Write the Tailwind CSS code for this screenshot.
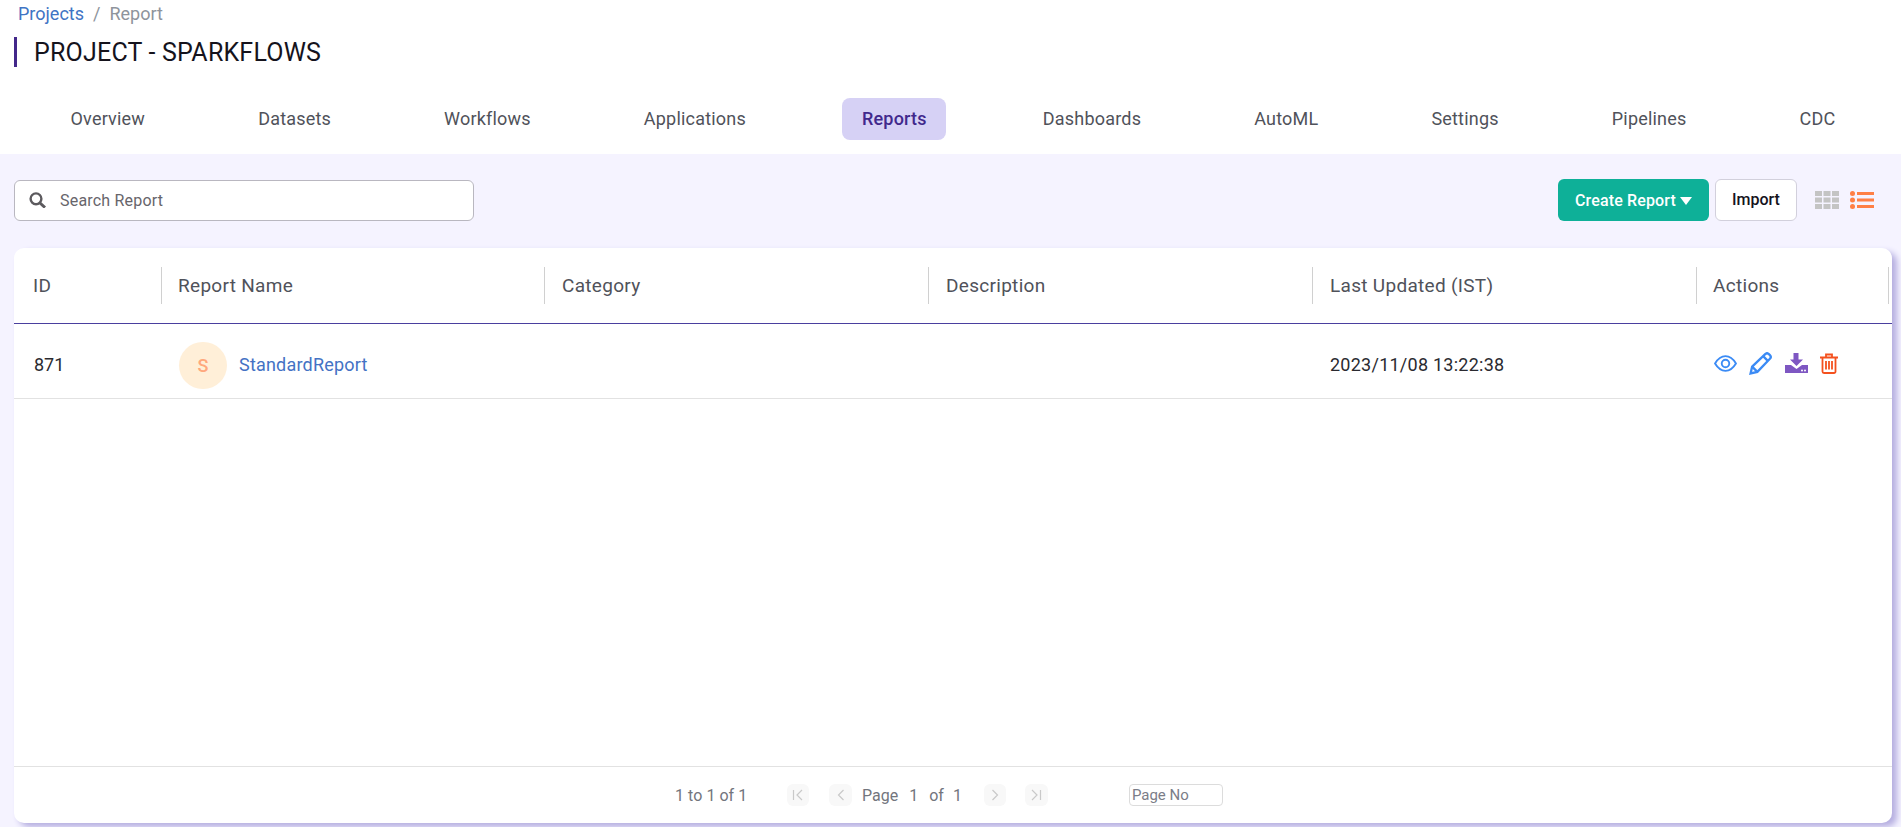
<!DOCTYPE html>
<html lang="en">

<head>
    <meta charset="UTF-8" />
    <title>Project Reports</title>
    <script src="https://cdn.jsdelivr.net/npm/@tailwindcss/browser@4"></script>
</head>

<body class="font-['Roboto',sans-serif] bg-[#f5f3ff] overflow-hidden">
    <div class="h-[827px] flex flex-col">
        <!-- top section -->
        <header class="bg-white h-[154px] shrink-0">
            <nav class="flex items-center gap-[9px] pl-[18px] h-[28px] text-[18px] leading-[28px]">
                <a class="text-[#4074c4]">Projects</a>
                <span class="text-[#8e949c]">/</span>
                <span class="text-[#8e949c]">Report</span>
            </nav>
            <div class="mt-[9px] ml-[14px] h-[30px] pl-[17px] border-l-[3px] border-[#43288a] flex items-center">
                <h1 class="text-[25px] tracking-[0.2px] pt-[2px] text-[#15131c]">PROJECT - SPARKFLOWS</h1>
            </div>
            <div class="mt-[31px] flex justify-around items-center pl-[14px] pr-[9px] text-[18px] tracking-[0.2px] text-[#50525a]">
                <a class="h-[42px] px-[19.5px] pb-[2px] flex items-center">Overview</a>
                <a class="h-[42px] px-[19.5px] pb-[2px] flex items-center">Datasets</a>
                <a class="h-[42px] px-[19.5px] pb-[2px] flex items-center">Workflows</a>
                <a class="h-[42px] px-[19.5px] pb-[2px] mr-[3px] flex items-center">Applications</a>
                <a class="h-[42px] px-[19.5px] pb-[2px] flex items-center rounded-[8px] bg-[#d6d1f5] text-[#41288c] font-medium">Reports</a>
                <a class="h-[42px] px-[19.5px] pb-[2px] ml-[3px] flex items-center">Dashboards</a>
                <a class="h-[42px] px-[19.5px] pb-[2px] flex items-center">AutoML</a>
                <a class="h-[42px] px-[19.5px] pb-[2px] flex items-center">Settings</a>
                <a class="h-[42px] px-[19.5px] pb-[2px] flex items-center">Pipelines</a>
                <a class="h-[42px] px-[19.5px] pb-[2px] flex items-center">CDC</a>
            </div>
        </header>

        <!-- toolbar -->
        <div class="mt-[25px] pl-[14px] pr-[27px] flex items-center justify-between h-[42px] shrink-0">
            <div class="w-[460px] h-[41px] bg-white border border-[#b9b7c0] rounded-[6px] flex items-center pl-[14px] gap-[14px]">
                <svg class="w-[17px] h-[16px] text-[#5c5a5e]" viewBox="0 0 17 16" fill="none" stroke="currentColor">
                    <circle cx="7" cy="6.8" r="5.4" stroke-width="2.4" />
                    <path d="M11 11l5 4.5" stroke-width="3" />
                </svg>
                <span class="text-[16px] tracking-[0.2px] pt-[2px] text-[#67656b]">Search Report</span>
            </div>
            <div class="flex items-center">
                <button class="w-[151px] h-[42px] pt-[1px] rounded-[6px] bg-[#0eb098] text-white text-[16px] tracking-[0.15px] font-medium flex items-center justify-center gap-[4px]">
                    Create Report
                    <svg class="w-[12px] h-[8px]" viewBox="0 0 12 8" fill="currentColor"><path d="M0 0h12L6 8z" /></svg>
                </button>
                <button class="ml-[6px] w-[82px] h-[42px] rounded-[6px] bg-white border border-[#d2d0dc] text-[#15131c] text-[16px] font-medium">Import</button>
                <svg class="ml-[18px] w-[24px] h-[18px]" viewBox="0 0 24 18" fill="#c4c4c4">
                    <rect x="0" y="0" width="7" height="5" />
                    <rect x="8.5" y="0" width="7" height="5" />
                    <rect x="17" y="0" width="7" height="5" />
                    <rect x="0" y="6.5" width="7" height="5" />
                    <rect x="8.5" y="6.5" width="7" height="5" />
                    <rect x="17" y="6.5" width="7" height="5" />
                    <rect x="0" y="13" width="7" height="5" />
                    <rect x="8.5" y="13" width="7" height="5" />
                    <rect x="17" y="13" width="7" height="5" />
                </svg>
                <svg class="ml-[11px] w-[24px] h-[18px]" viewBox="0 0 24 18" fill="#ff7f45">
                    <circle cx="2.5" cy="2.5" r="2.5" />
                    <circle cx="2.5" cy="9" r="2.5" />
                    <circle cx="2.5" cy="15.5" r="2.5" />
                    <rect x="7" y="1" width="17" height="3" />
                    <rect x="7" y="7.5" width="17" height="3" />
                    <rect x="7" y="14" width="17" height="3" />
                </svg>
            </div>
        </div>

        <!-- report table -->
        <section class="mt-[27px] ml-[14px] w-[1878px] h-[575px] bg-white rounded-[10px] shadow-[5px_4px_6px_0_#b5aee0] flex flex-col">
            <div class="h-[76px] shrink-0 border-b border-[#4a3f9f] grid grid-cols-[148px_383px_384px_384px_384px_192px] text-[19px] text-[#50525a] tracking-[0.3px]">
                <div class="flex items-center justify-between pl-[19px]"><span class="pt-[2px]">ID</span><i class="w-px h-[37px] bg-[#d0d0d0]"></i></div>
                <div class="flex items-center justify-between pl-[16px]"><span class="pt-[2px]">Report Name</span><i class="w-px h-[37px] bg-[#d0d0d0]"></i></div>
                <div class="flex items-center justify-between pl-[17px]"><span class="pt-[2px]">Category</span><i class="w-px h-[37px] bg-[#d0d0d0]"></i></div>
                <div class="flex items-center justify-between pl-[17px]"><span class="pt-[2px]">Description</span><i class="w-px h-[37px] bg-[#d0d0d0]"></i></div>
                <div class="flex items-center justify-between pl-[17px]"><span class="pt-[2px]">Last Updated (IST)</span><i class="w-px h-[37px] bg-[#d0d0d0]"></i></div>
                <div class="flex items-center justify-between pl-[16px]"><span class="pt-[2px]">Actions</span><i class="w-px h-[37px] bg-[#d0d0d0]"></i></div>
            </div>
            <div class="h-[75px] shrink-0 pt-[8px] border-b border-[#e2e2e2] grid grid-cols-[148px_383px_384px_384px_384px_192px] items-center text-[18px] text-[#2a2a30]">
                <div class="pl-[20px] pb-[2px]">871</div>
                <div class="pl-[17px] flex items-center gap-[12px]">
                    <span class="w-[48px] h-[47px] rounded-full bg-[#ffefd8] text-[#ffa87d] text-[18px] font-medium flex items-center justify-center">S</span>
                    <a class="text-[#4472c4] tracking-[0.2px] pb-[2px]">StandardReport</a>
                </div>
                <div></div>
                <div></div>
                <div class="pl-[17px] pb-[2px] tracking-[0.25px]">2023/11/08 13:22:38</div>
                <div class="pl-[17px] flex items-center -translate-y-[2px]">
                    <svg class="w-[23px] h-[17px]" viewBox="0 0 22 16" fill="none" stroke="#3b8bf5" stroke-width="1.8">
                        <path d="M1 8C4 3 7.5 1 11 1s7 2 10 7c-3 5-6.5 7-10 7S4 13 1 8z" />
                        <circle cx="11" cy="8" r="3.6" />
                    </svg>
                    <svg class="ml-[12px] w-[23px] h-[23px]" viewBox="0 0 22 22" fill="none" stroke="#3b8bf5" stroke-width="2.2">
                        <path d="M1.5 20.5 3 14 15.5 2a2.500 2.500 0 0 1 3.500 0l1 1a2.500 2.500 0 0 1 0 3.500L8 19z" />
                        <path d="M13.5 4l4.500 4.500M3 14l5 5" />
                    </svg>
                    <svg class="ml-[13px] w-[23px] h-[20px]" viewBox="0 0 23 20" fill="#7e57c2">
                        <path d="M8.5 0h5v6.500H18L11.500 13 5 6.500h3.500z" />
                        <path d="M0 12h6l5.500 4 5.500-4h6v8H0z" />
                        <circle cx="17" cy="17.5" r="1" fill="#fff" />
                        <circle cx="20" cy="17.5" r="1" fill="#fff" />
                    </svg>
                    <svg class="ml-[12px] w-[18px] h-[21px]" viewBox="0 0 18 21" fill="none" stroke="#f4511e" stroke-width="1.8">
                        <path d="M0 4.5h18M6 4.5V1.500h6v3M2.500 4.500v14a1.500 1.500 0 0 0 1.500 1.500h10a1.500 1.500 0 0 0 1.500-1.500v-14" />
                        <path d="M6 8v8.500M9 8v8.500M12 8v8.500" />
                    </svg>
                </div>
            </div>
            <div class="flex-1"></div>
            <!-- pagination -->
            <div class="h-[57px] shrink-0 border-t border-[#e2e2e2] pl-[661px] flex items-center text-[16px] text-[#73757d]">
                <span class="w-[112px] pt-[2px] tracking-[0.05px]">1 to 1 of 1</span>
                <span class="w-[22px] h-[22px] rounded-[6px] bg-[#f8f8f8] flex items-center justify-center">
                    <svg class="w-[12px] h-[12px]" viewBox="0 0 12 12" fill="none" stroke="#c9c9c9" stroke-width="1.2"><path d="M1.5 1v10M10 1 5 6l5 5" /></svg>
                </span>
                <span class="ml-[20px] w-[23px] h-[22px] rounded-[6px] bg-[#f8f8f8] flex items-center justify-center">
                    <svg class="w-[12px] h-[12px]" viewBox="0 0 12 12" fill="none" stroke="#c9c9c9" stroke-width="1.2"><path d="M8.5 1 3.5 6l5 5" /></svg>
                </span>
                <span class="ml-[10px] pt-[2px]">Page</span>
                <span class="ml-[11px] pt-[2px]">1</span>
                <span class="ml-[11px] pt-[2px]">of</span>
                <span class="ml-[9px] pt-[2px]">1</span>
                <span class="ml-[22px] w-[22px] h-[22px] rounded-[6px] bg-[#f8f8f8] flex items-center justify-center">
                    <svg class="w-[12px] h-[12px]" viewBox="0 0 12 12" fill="none" stroke="#c9c9c9" stroke-width="1.2"><path d="M3.5 1l5 5-5 5" /></svg>
                </span>
                <span class="ml-[19px] w-[23px] h-[22px] rounded-[6px] bg-[#f8f8f8] flex items-center justify-center">
                    <svg class="w-[12px] h-[12px]" viewBox="0 0 12 12" fill="none" stroke="#c9c9c9" stroke-width="1.2"><path d="M10.5 1v10M2 1l5 5-5 5" /></svg>
                </span>
                <span class="ml-[81px] w-[94px] h-[22px] rounded-[4px] border border-[#dcdcdc] pl-[2px] text-[15px] leading-[20px] text-[#7b7d88]">Page No</span>
            </div>
        </section>
    </div>
</body>

</html>
